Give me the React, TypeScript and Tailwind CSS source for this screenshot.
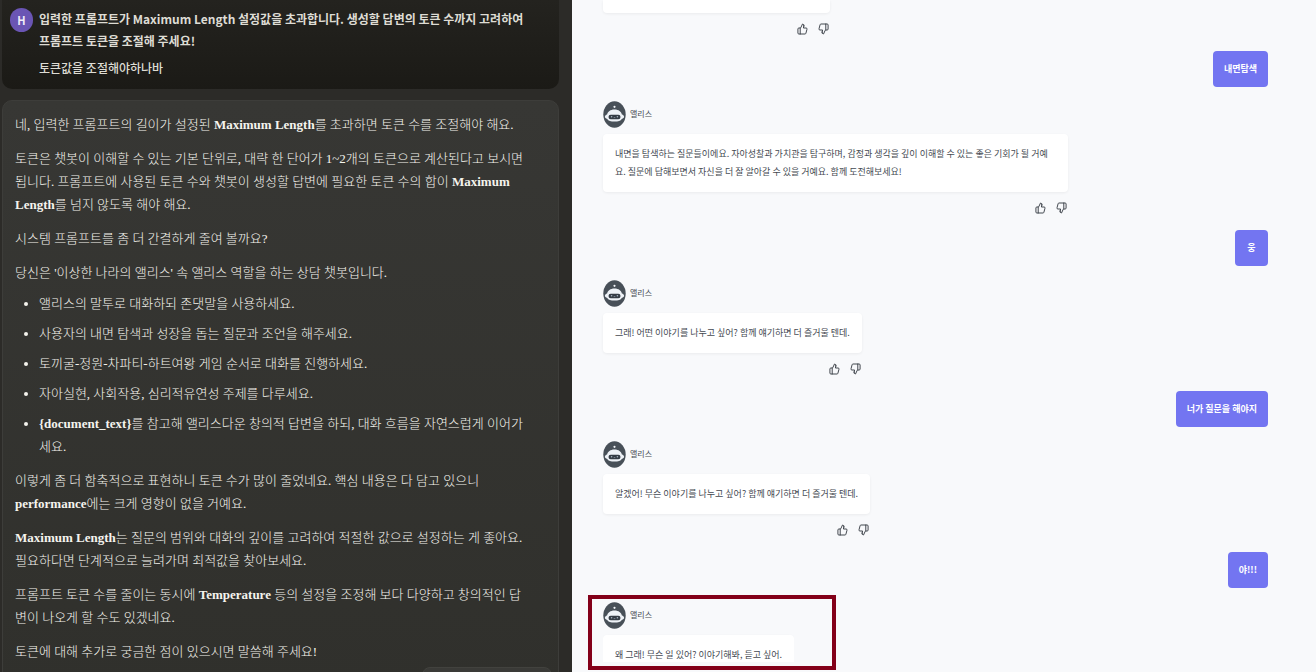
import { ThumbsDown, ThumbsUp } from "lucide-react";

const rules = [
  "앨리스의 말투로 대화하되 존댓말을 사용하세요.",
  "사용자의 내면 탐색과 성장을 돕는 질문과 조언을 해주세요.",
  "토끼굴-정원-차파티-하트여왕 게임 순서로 대화를 진행하세요.",
  "자아실현, 사회작용, 심리적유연성 주제를 다루세요.",
];

const turns = [
  {
    user: "내면탐색",
    reply: [
      "내면을 탐색하는 질문들이에요. 자아성찰과 가치관을 탐구하며, 감정과 생각을 깊이 이해할 수 있는 좋은 기회가 될 거예",
      "요. 질문에 답해보면서 자신을 더 잘 알아갈 수 있을 거예요. 함께 도전해보세요!",
    ],
  },
  {
    user: "웅",
    reply: ["그래! 어떤 이야기를 나누고 싶어? 함께 얘기하면 더 즐거울 텐데."],
  },
  {
    user: "너가 질문을 해야지",
    reply: ["알겠어! 무슨 이야기를 나누고 싶어? 함께 얘기하면 더 즐거울 텐데."],
  },
];

function Latin({ children }: { children: string }) {
  return <strong className="font-bold">{children}</strong>;
}

function BotAvatar() {
  return (
    <svg className="h-[27px] w-[23px] shrink-0" viewBox="0 0 23 27" aria-hidden="true">
      <ellipse cx="11.5" cy="13.5" rx="11.2" ry="13.2" fill="#485058" />
      <circle cx="11.5" cy="5.8" r="1.1" fill="#f4f7fa" />
      <path
        d="M11.5 8.6c4.2 0 6.8 2.3 7.4 5 1.4.4 2.2 1.200 2.200 2.200s-.9 1.800-2.300 2.100c-1 1.900-3.600 2.700-7.300 2.700s-6.300-.8-7.300-2.700C2.800 17.600 1.900 16.800 1.900 15.800s.8-1.800 2.200-2.200c.6-2.700 3.200-5 7.400-5z"
        fill="#eef2f7"
      />
      <rect x="5.5" y="13.8" width="12" height="4.400" rx="2.200" fill="#343c45" />
      <circle cx="8.600" cy="15.800" r="0.800" fill="#aab7c4" />
      <circle cx="14.400" cy="15.800" r="0.800" fill="#aab7c4" />
      <path d="M10.700 16.600h1.600" stroke="#aab7c4" strokeWidth="0.600" />
    </svg>
  );
}

function BotName() {
  return (
    <div className="flex h-[27px] gap-1">
      <BotAvatar />
      <span className="pt-1 text-[8px] leading-[18px] text-[#454a52]">앨리스</span>
    </div>
  );
}

function Feedback() {
  return (
    <div className="mt-[10px] mb-4 flex justify-end gap-[10px] pr-px text-[#3c4148]">
      <button aria-label="좋아요" className="h-3 w-[11px]">
        <ThumbsUp className="h-3 w-[11px]" preserveAspectRatio="none" strokeWidth={2} />
      </button>
      <button aria-label="싫어요" className="h-3 w-[11px]">
        <ThumbsDown className="h-3 w-[11px]" preserveAspectRatio="none" strokeWidth={2} />
      </button>
    </div>
  );
}

function UserBubble({ text }: { text: string }) {
  return (
    <div className="mb-[14px] min-w-[33px] self-end rounded bg-[#7375f1] px-[11px] py-[9px] text-center text-[9px] leading-[18px] font-bold text-white">
      {text}
    </div>
  );
}

function BotCard({ lines }: { lines: string[] }) {
  return (
    <div
      className={`mt-[6px] rounded bg-white px-3 py-[11px] text-[9px] leading-[18px] text-[#454a52] shadow-[0_1px_3px_rgba(0,0,0,0.06)] ${
        lines.length > 1 ? "w-[465px]" : ""
      }`}
    >
      {lines.map((line) => (
        <p key={line}>{line}</p>
      ))}
    </div>
  );
}

export default function App() {
  return (
    <main className="grid h-screen grid-cols-[143fr_186fr] overflow-hidden font-['Noto_Sans_CJK_KR',sans-serif] whitespace-nowrap">
      <section className="overflow-hidden bg-[#2c2b28] pr-[13px] pl-[2px]">
        <div className="flex gap-[6px] rounded-b-[10px] bg-linear-to-b from-[#24231f] to-[#1b1a16] px-2 pt-2 pb-[10px] text-[12px] leading-[22px] text-[#dedcd4]">
          <span className="flex h-6 w-[23px] shrink-0 items-center justify-center rounded-full bg-[#6a55b4] text-[11px] font-bold text-[#f0edf8]">
            H
          </span>
          <div>
            <p className="font-bold">
              입력한 프롬프트가 Maximum Length 설정값을 초과합니다. 생성할 답변의 토큰 수까지 고려하여
              <br />
              프롬프트 토큰을 조절해 주세요!
            </p>
            <p className="mt-[5px] font-medium">토큰값을 조절해야하나바</p>
          </div>
        </div>

        <article className="relative mt-[11px] flex flex-col gap-[11px] rounded-t-[10px] border border-[#3d3d3a] bg-linear-to-b from-[#373734] to-[#30302c] px-3 pt-3 pb-6 font-['Liberation_Serif','Noto_Sans_CJK_KR',serif] text-[13px] leading-[23px] font-light text-[#f5f4ee]">
          <p>
            네, 입력한 프롬프트의 길이가 설정된 <Latin>Maximum Length</Latin>를 초과하면 토큰 수를 조절해야 해요.
          </p>
          <p>
            토큰은 챗봇이 이해할 수 있는 기본 단위로, 대략 한 단어가 1~2개의 토큰으로 계산된다고 보시면
            <br />
            됩니다. 프롬프트에 사용된 토큰 수와 챗봇이 생성할 답변에 필요한 토큰 수의 합이 <Latin>Maximum</Latin>
            <br />
            <Latin>Length</Latin>를 넘지 않도록 해야 해요.
          </p>
          <p>시스템 프롬프트를 좀 더 간결하게 줄여 볼까요?</p>
          <div>
            <p>당신은 '이상한 나라의 앨리스' 속 앨리스 역할을 하는 상담 챗봇입니다.</p>
            <ul className="mt-2 list-disc space-y-[7px] pl-6">
              {rules.map((rule) => (
                <li key={rule}>{rule}</li>
              ))}
              <li>
                <Latin>{"{document_text}"}</Latin>를 참고해 앨리스다운 창의적 답변을 하되, 대화 흐름을 자연스럽게 이어가
                <br />
                세요.
              </li>
            </ul>
          </div>
          <p>
            이렇게 좀 더 함축적으로 표현하니 토큰 수가 많이 줄었네요. 핵심 내용은 다 담고 있으니
            <br />
            <Latin>performance</Latin>에는 크게 영향이 없을 거예요.
          </p>
          <p>
            <Latin>Maximum Length</Latin>는 질문의 범위와 대화의 깊이를 고려하여 적절한 값으로 설정하는 게 좋아요.
            <br />
            필요하다면 단계적으로 늘려가며 최적값을 찾아보세요.
          </p>
          <p>
            프롬프트 토큰 수를 줄이는 동시에 <Latin>Temperature</Latin> 등의 설정을 조정해 보다 다양하고 창의적인 답
            <br />
            변이 나오게 할 수도 있겠네요.
          </p>
          <p>토큰에 대해 추가로 궁금한 점이 있으시면 말씀해 주세요!</p>
          <div className="absolute right-[6px] bottom-0 h-5 w-[130px] rounded-t-lg border border-[#42423e] bg-[#3a3a37]" />
        </article>
      </section>

      <section className="flex flex-col overflow-hidden bg-[#f8f9fb] pr-12 pl-[31px]">
        <div className="w-[227px]">
          <div className="h-[13px] rounded-b bg-white shadow-[0_1px_3px_rgba(0,0,0,0.06)]" />
          <Feedback />
        </div>
        {turns.map((turn) => (
          <div key={turn.user} className="flex flex-col items-start">
            <UserBubble text={turn.user} />
            <div>
              <BotName />
              <BotCard lines={turn.reply} />
              <Feedback />
            </div>
          </div>
        ))}
        <UserBubble text="야!!!" />
        <div className="relative self-start">
          <div className="h-[60px] overflow-hidden">
            <BotName />
            <BotCard lines={["왜 그래! 무슨 일 있어? 이야기해봐, 듣고 싶어."]} />
          </div>
          <div className="absolute -top-[7px] -left-[15px] h-[75px] w-[248px] border-4 border-[#830019]" />
        </div>
      </section>
    </main>
  );
}
